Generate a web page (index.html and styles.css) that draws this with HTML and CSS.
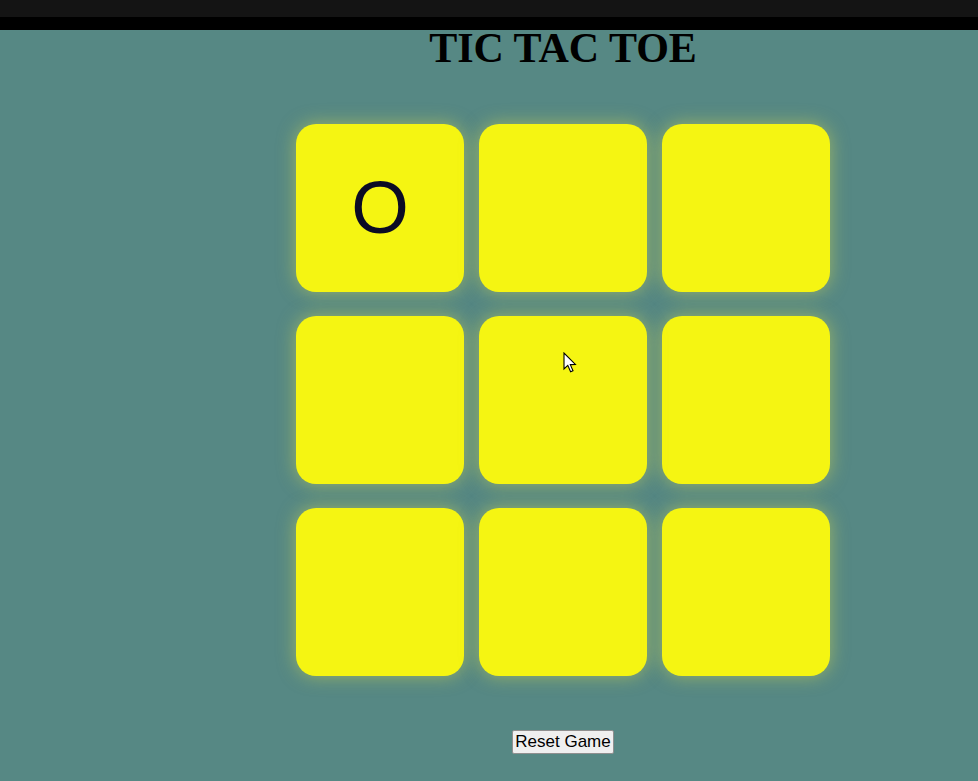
FILE: index.html
```html
<!DOCTYPE html>
<html>
<head>
<meta charset="utf-8">
<title>Tic Tac Toe</title>
<link rel="stylesheet" href="styles.css">
</head>
<body>
<div class="topbar"><div class="topbar-upper"></div><div class="topbar-lower"></div></div>
<main class="game">
  <h1 class="title">TIC TAC TOE</h1>
  <div class="board">
    <div class="cell">O</div>
    <div class="cell"></div>
    <div class="cell"></div>
    <div class="cell"></div>
    <div class="cell cell-cursor">
      <svg class="cursor" width="14" height="22" viewBox="0 0 14 22"><path d="M1 1 L1 17 L4.8 13.4 L7.6 19.8 L10 18.8 L7.3 12.6 L12.4 12.4 Z" fill="#fff" stroke="#000" stroke-width="1.1" stroke-linejoin="miter"/></svg>
    </div>
    <div class="cell"></div>
    <div class="cell"></div>
    <div class="cell"></div>
    <div class="cell"></div>
  </div>
  <button class="reset">Reset Game</button>
</main>
</body>
</html>
```
FILE: styles.css
```css
html, body {
  margin: 0;
  padding: 0;
}
body {
  background: #568884;
  height: 781px;
  overflow: hidden;
}
.topbar-upper {
  height: 17px;
  background: #141414;
}
.topbar-lower {
  height: 13px;
  background: #000;
}
.game {
  width: 536px;
  margin-left: 295px;
  display: flex;
  flex-direction: column;
  align-items: center;
}
.title {
  margin: 0;
  font-family: "Liberation Serif", "Times New Roman", serif;
  font-weight: bold;
  font-size: 42px;
  line-height: 36px;
  color: #000;
  text-align: center;
}
.board {
  margin-top: 58px;
  display: grid;
  grid-template-columns: repeat(3, 168px);
  grid-auto-rows: 168px;
  column-gap: 15px;
  row-gap: 24px;
}
.cell {
  background: #f5f512;
  border-radius: 20px;
  box-shadow: 0 0 18px rgba(225, 225, 70, 0.5);
  display: flex;
  align-items: center;
  justify-content: center;
  font-family: "Liberation Sans", Arial, sans-serif;
  font-size: 74px;
  color: #0b0b24;
  line-height: 1;
}
.cell-cursor {
  position: relative;
}
.cursor {
  position: absolute;
  left: 84px;
  top: 36px;
}
.reset {
  margin-top: 54px;
  font-family: "Liberation Sans", Arial, sans-serif;
  font-size: 17px;
  padding: 0 2px;
  background: #efefef;
  border: 1px solid #8f8f8f;
  border-radius: 2px;
  color: #000;
  width: 102px;
  height: 24px;
  line-height: 22px;
}
```
